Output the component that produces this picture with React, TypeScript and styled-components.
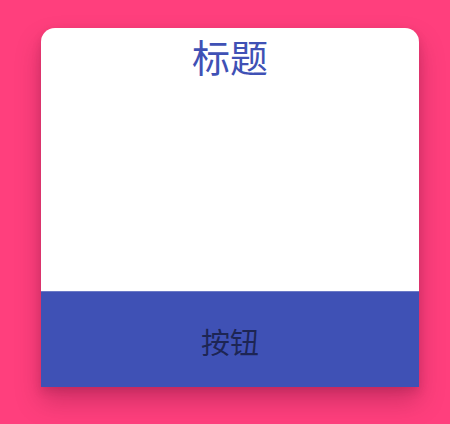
import styled, { createGlobalStyle } from "styled-components";

const GlobalStyle = createGlobalStyle`
    html,
    body {
        margin: 0;
        padding: 0;
        background: #ff3f7d;
    }

    body {
        font-family: "Noto Sans CJK SC", "Noto Sans", sans-serif;
    }
`;

const Page = styled.div`
    display: flex;
    width: 450px;
    height: 424px;
    box-sizing: border-box;
    padding: 28px 31px 0 41px;
    background: #ff3f7d;
`;

const Card = styled.div`
    display: flex;
    flex-direction: column;
    width: 378px;
    height: 359px;
    border-radius: 14px 14px 0 0;
    background: #ffffff;
    overflow: hidden;
    box-shadow:
        0 14px 26px rgba(70, 0, 35, 0.26),
        0 4px 10px rgba(70, 0, 35, 0.14);
`;

const Body = styled.div`
    display: flex;
    flex: 1;
    flex-direction: column;
    align-items: center;
`;

const Title = styled.h1`
    margin: 0;
    font-size: 38px;
    font-weight: 400;
    line-height: 55px;
    color: #3f51b5;
`;

const ActionButton = styled.button`
    display: flex;
    align-items: center;
    justify-content: center;
    height: 96px;
    padding: 2px 0 0 0;
    border: none;
    border-top: 1px solid #6b7ac6;
    background: #3f51b5;
    font-family: inherit;
    font-size: 29px;
    font-weight: 400;
    line-height: 42px;
    color: rgba(0, 0, 0, 0.55);
    cursor: pointer;
`;

export default function App() {
    return (
        <>
            <GlobalStyle />
            <Page>
                <Card>
                    <Body>
                        <Title>标题</Title>
                    </Body>
                    <ActionButton>按钮</ActionButton>
                </Card>
            </Page>
        </>
    );
}
